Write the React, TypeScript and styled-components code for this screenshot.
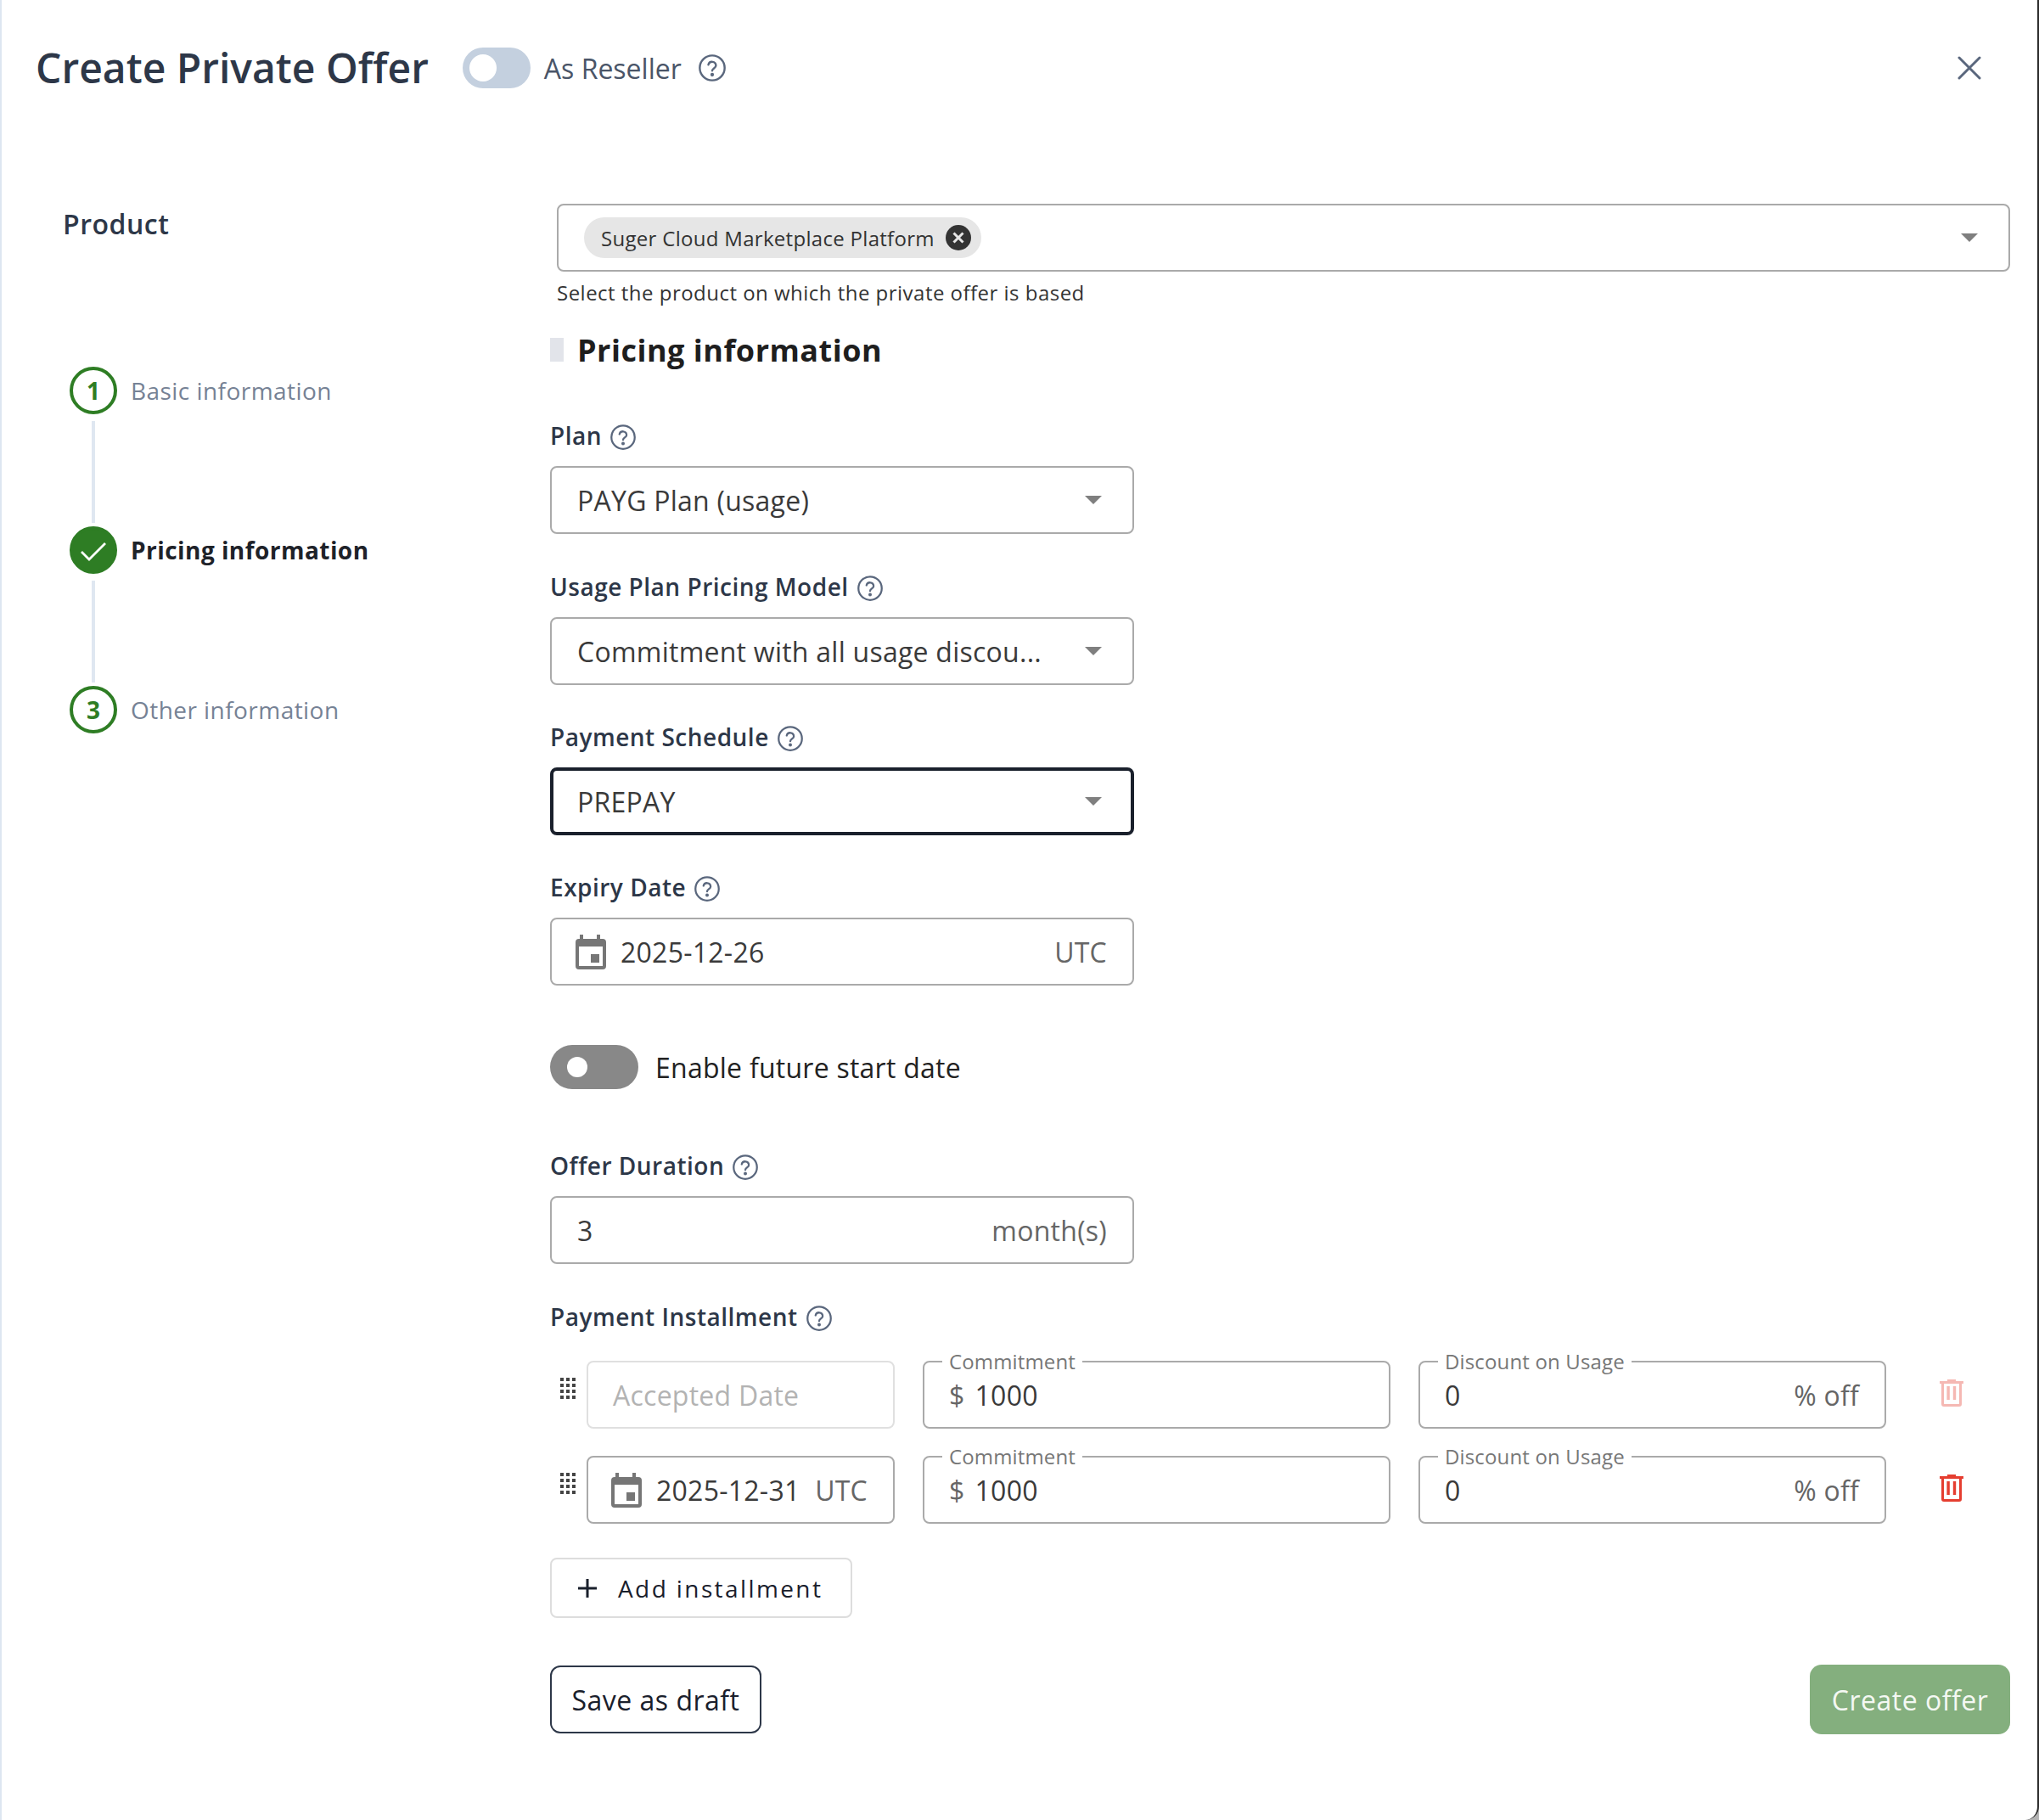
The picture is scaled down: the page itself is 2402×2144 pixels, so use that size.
import React from "react";
import styled, { createGlobalStyle } from "styled-components";

const GlobalStyle = createGlobalStyle`
    html, body {
        margin: 0;
        padding: 0;
        background: #b4b4b4;
    }

    * {
        box-sizing: border-box;
    }
`;

const HelpIcon: React.FC<{ size?: number }> = ({ size = 32 }) => (
    <svg width={size} height={size} viewBox="0 0 24 24" fill="none" stroke="#5a677d" strokeWidth="1.8" strokeLinecap="round">
        <circle cx="12" cy="12" r="11" />
        <path d="M8.6 9.2a3.4 3.4 0 0 1 6.7.7c0 2.2-3.3 2.6-3.3 4.6" />
        <circle cx="12" cy="18" r="0.7" fill="#5a677d" />
    </svg>
);

const CaretIcon: React.FC = () => (
    <svg width="20" height="10" viewBox="0 0 20 10">
        <path d="M0 0h20L10 10z" fill="#7f7f7f" />
    </svg>
);

const CalendarIcon: React.FC = () => (
    <svg width="36" height="41" viewBox="0 0 36 41" fill="#767676">
        <path d="M5 0h4v5h16V0h4v5h3a4 4 0 0 1 4 4v28a4 4 0 0 1-4 4H4a4 4 0 0 1-4-4V9a4 4 0 0 1 4-4h1zM4 14v23h28V14z" fillRule="evenodd" />
        <rect x="18" y="23" width="10" height="10" />
    </svg>
);

const TrashIcon: React.FC<{ faded?: boolean }> = ({ faded }) => (
    <svg width="28" height="32" viewBox="0 0 28 32" fill="#e53e30" opacity={faded ? 0.36 : 1}>
        <path d="M9 0h10v2h9v3H0V2h9z" />
        <path d="M2 5h3v24h18V5h3v24a3 3 0 0 1-3 3H5a3 3 0 0 1-3-3z" />
        <rect x="8.4" y="8" width="3.4" height="16" />
        <rect x="15.8" y="8" width="3.4" height="16" />
    </svg>
);

const DragIcon: React.FC = () => (
    <svg width="18" height="25" viewBox="0 0 18 25" fill="#444">
        {[0, 7, 14].map((x) =>
            [0, 7, 14, 21].map((y) => <rect key={`${x}-${y}`} x={x} y={y} width="4" height="4" />)
        )}
    </svg>
);

const Page = styled.div`
    position: relative;
    width: 2402px;
    height: 2144px;
    overflow: hidden;
    background: #ffffff;
    font-family: "Open Sans", "Liberation Sans", sans-serif;
    border-left: 2px solid #dde6f1;
    border-right: 2px solid #2b2b2b;
    border-bottom-right-radius: 16px;
`;

const Header = styled.header`
    display: flex;
    align-items: center;
    height: 48px;
    margin-top: 56px;
    padding: 0 66px 0 40px;
`;

const Title = styled.h1`
    margin: 0 40px 0 0;
    font-size: 48px;
    font-weight: 600;
    line-height: 48px;
    color: #2d3748;
`;

const Switch = styled.span<{ $large?: boolean }>`
    position: relative;
    flex: none;
    display: block;
    width: ${(p) => (p.$large ? "104px" : "80px")};
    height: ${(p) => (p.$large ? "52px" : "48px")};
    border-radius: 26px;
    background: ${(p) => (p.$large ? "#888888" : "#c4d0df")};

    &::after {
        content: "";
        position: absolute;
        left: ${(p) => (p.$large ? "20px" : "8px")};
        top: ${(p) => (p.$large ? "14px" : "8px")};
        width: ${(p) => (p.$large ? "24px" : "32px")};
        height: ${(p) => (p.$large ? "24px" : "32px")};
        border-radius: 50%;
        background: #ffffff;
    }
`;

const Reseller = styled.span`
    margin: 0 20px 0 16px;
    font-size: 32px;
    color: #4a5568;
`;

const Close = styled.span`
    display: flex;
    margin-left: auto;
`;

const Body = styled.main`
    display: flex;
    margin-top: 136px;
    padding: 0 32px 0 0;
`;

const Side = styled.aside`
    flex: none;
    width: 646px;
    padding-left: 72px;
`;

const SideTitle = styled.div`
    padding-top: 2px;
    font-size: 32px;
    font-weight: 600;
    line-height: 44px;
    color: #2d3748;
    letter-spacing: 0.5px;
`;

const Stepper = styled.ol`
    list-style: none;
    margin: 146px 0 0 8px;
    padding: 0;
`;

const StepItem = styled.li`
    display: flex;
    align-items: center;
    gap: 16px;
`;

const StepDot = styled.span<{ $done?: boolean }>`
    flex: none;
    display: flex;
    align-items: center;
    justify-content: center;
    width: 56px;
    height: 56px;
    border: 4px solid #2e7d24;
    border-radius: 50%;
    background: ${(p) => (p.$done ? "#2e7d24" : "#ffffff")};
    color: #2e7d24;
    font-size: 28px;
    font-weight: 700;

    svg {
        margin-top: 4px;
    }
`;

const StepText = styled.span<{ $active?: boolean }>`
    font-size: 28px;
    letter-spacing: 0.45px;
    font-weight: ${(p) => (p.$active ? 700 : 400)};
    color: ${(p) => (p.$active ? "#1e2229" : "#768295")};
`;

const StepLine = styled.div`
    width: 4px;
    height: 120px;
    margin: 8px 0 4px 26px;
    background: #dfe7f1;
`;

const Content = styled.section`
    flex: 1;
    min-width: 0;
`;

const ProductBox = styled.div`
    display: flex;
    align-items: center;
    height: 80px;
    margin-left: 8px;
    padding: 0 36px 0 30px;
    border: 2px solid #aaaaaa;
    border-radius: 8px;
`;

const Chip = styled.span`
    display: flex;
    align-items: center;
    height: 48px;
    padding: 0 12px 0 20px;
    border-radius: 24px;
    background: #e6e6e6;
    font-size: 24px;
    letter-spacing: 0.3px;
    color: #333333;
`;

const ChipClose = styled.span`
    display: flex;
    margin-left: 13px;
`;

const Push = styled.span<{ $inset?: number }>`
    display: flex;
    margin-left: auto;
    margin-right: ${(p) => p.$inset ?? 0}px;
`;

const Helper = styled.p`
    margin: 9px 0 0 8px;
    font-size: 24px;
    line-height: 32px;
    letter-spacing: 0.48px;
    color: #333333;
`;

const SectionTitle = styled.h2`
    display: flex;
    align-items: center;
    gap: 16px;
    height: 44px;
    margin: 29px 0 0;
    font-size: 36px;
    font-weight: 700;
    letter-spacing: 0.5px;
    color: #1e1e1e;

    &::before {
        content: "";
        width: 16px;
        height: 28px;
        background: #e2e4ea;
    }
`;

const FieldLabel = styled.div<{ $top: number }>`
    display: flex;
    align-items: center;
    gap: 10px;
    height: 40px;
    margin-top: ${(p) => p.$top}px;
    margin-bottom: 16px;
    font-size: 28px;
    font-weight: 600;
    letter-spacing: 0.5px;
    color: #2d3748;

    svg {
        margin-top: 3px;
    }
`;

const Input = styled.div<{ $focused?: boolean; $faded?: boolean; $width?: number }>`
    position: relative;
    display: flex;
    align-items: center;
    width: ${(p) => p.$width ?? 688}px;
    height: 80px;
    padding: 0 ${(p) => (p.$focused ? 28 : 30)}px;
    border: ${(p) => (p.$focused ? "4px solid #1a202c" : `2px solid ${p.$faded ? "#e0e0e0" : "#aaaaaa"}`)};
    border-radius: 8px;
    font-size: 32px;
    letter-spacing: 0.25px;
    color: ${(p) => (p.$faded ? "#b3b3b3" : "#3a3a3a")};
    background: #ffffff;
`;

const Suffix = styled.span`
    margin-left: auto;
    color: #666666;
`;

const DateIcon = styled.span`
    display: flex;
    margin-left: -2px;
    margin-right: 17px;
`;

const DateValue = styled.span`
    white-space: nowrap;
`;

const ToggleRow = styled.div`
    display: flex;
    align-items: center;
    gap: 20px;
    height: 52px;
    margin-top: 70px;
    font-size: 32px;
    letter-spacing: 0.25px;
    color: #222222;
`;

const InstallmentRow = styled.div`
    display: flex;
    align-items: center;
    margin-top: 32px;

    ${Input} {
        padding-left: 29px;
    }
`;

const Handle = styled.span`
    display: flex;
    width: 43px;
    padding-left: 12px;
    margin-top: -16px;
`;

const Floating = styled.span`
    position: absolute;
    left: 21px;
    top: -17px;
    padding: 0 8px;
    background: #ffffff;
    font-size: 24px;
    line-height: 32px;
    letter-spacing: 0.15px;
    color: #777777;
`;

const Spacer = styled.span`
    flex: none;
    width: 33px;
`;

const Trash = styled.span`
    display: flex;
    margin: -4px 0 0 63px;
`;

const Dollar = styled.span`
    margin-right: 12px;
    color: #666666;
`;

const AddButton = styled.div`
    display: flex;
    align-items: center;
    width: 356px;
    height: 71px;
    margin-top: 40px;
    padding-left: 31px;
    border: 2px solid #dddddd;
    border-radius: 8px;
    font-size: 28px;
    letter-spacing: 2.4px;
    color: #1a202c;

    svg {
        margin-right: 25px;
    }
`;

const Footer = styled.div`
    display: flex;
    align-items: center;
    justify-content: space-between;
    margin-top: 55px;
`;

const DraftButton = styled.div`
    display: flex;
    align-items: center;
    justify-content: center;
    width: 249px;
    height: 80px;
    border: 2px solid #2d3748;
    border-radius: 12px;
    font-size: 32px;
    letter-spacing: 0.5px;
    color: #1a202c;
`;

const CreateButton = styled.div`
    display: flex;
    align-items: center;
    justify-content: center;
    width: 236px;
    height: 82px;
    border-radius: 14px;
    background: #84af7e;
    font-size: 32px;
    letter-spacing: 0.5px;
    color: #f4f8f3;
`;

const App: React.FC = () => {
    return (
        <Page>
            <GlobalStyle />
            <Header>
                <Title>Create Private Offer</Title>
                <Switch />
                <Reseller>As Reseller</Reseller>
                <HelpIcon />
                <Close>
                    <svg width="28" height="28" viewBox="0 0 28 28" stroke="#5a677d" strokeWidth="3" strokeLinecap="round">
                        <path d="M2 2l24 24M26 2L2 26" />
                    </svg>
                </Close>
            </Header>
            <Body>
                <Side>
                    <SideTitle>Product</SideTitle>
                    <Stepper>
                        <StepItem>
                            <StepDot>1</StepDot>
                            <StepText>Basic information</StepText>
                        </StepItem>
                        <StepLine />
                        <StepItem>
                            <StepDot $done>
                                <svg width="30" height="22" viewBox="0 0 30 22" fill="none" stroke="#ffffff" strokeWidth="2.8">
                                    <path d="M1 11l9 9L29 1" />
                                </svg>
                            </StepDot>
                            <StepText $active>Pricing information</StepText>
                        </StepItem>
                        <StepLine />
                        <StepItem>
                            <StepDot>3</StepDot>
                            <StepText>Other information</StepText>
                        </StepItem>
                    </Stepper>
                </Side>
                <Content>
                    <ProductBox>
                        <Chip>
                            Suger Cloud Marketplace Platform
                            <ChipClose>
                                <svg width="30" height="30" viewBox="0 0 30 30">
                                    <circle cx="15" cy="15" r="15" fill="#333333" />
                                    <path d="M9.5 9.5l11 11M20.5 9.5l-11 11" stroke="#e6e6e6" strokeWidth="3" />
                                </svg>
                            </ChipClose>
                        </Chip>
                        <Push>
                            <CaretIcon />
                        </Push>
                    </ProductBox>
                    <Helper>Select the product on which the private offer is based</Helper>
                    <SectionTitle>Pricing information</SectionTitle>

                    <FieldLabel $top={59}>
                        Plan <HelpIcon size={30} />
                    </FieldLabel>
                    <Input>
                        PAYG Plan (usage)
                        <Push $inset={6}>
                            <CaretIcon />
                        </Push>
                    </Input>

                    <FieldLabel $top={42}>
                        Usage Plan Pricing Model <HelpIcon size={30} />
                    </FieldLabel>
                    <Input>
                        Commitment with all usage discou...
                        <Push $inset={6}>
                            <CaretIcon />
                        </Push>
                    </Input>

                    <FieldLabel $top={41}>
                        Payment Schedule <HelpIcon size={30} />
                    </FieldLabel>
                    <Input $focused>
                        PREPAY
                        <Push $inset={6}>
                            <CaretIcon />
                        </Push>
                    </Input>

                    <FieldLabel $top={41}>
                        Expiry Date <HelpIcon size={30} />
                    </FieldLabel>
                    <Input>
                        <DateIcon>
                            <CalendarIcon />
                        </DateIcon>
                        <DateValue>2025-12-26</DateValue>
                        <Suffix>UTC</Suffix>
                    </Input>

                    <ToggleRow>
                        <Switch $large />
                        Enable future start date
                    </ToggleRow>

                    <FieldLabel $top={70}>
                        Offer Duration <HelpIcon size={30} />
                    </FieldLabel>
                    <Input>
                        3<Suffix>month(s)</Suffix>
                    </Input>

                    <FieldLabel $top={42}>
                        Payment Installment <HelpIcon size={30} />
                    </FieldLabel>

                    <InstallmentRow>
                        <Handle>
                            <DragIcon />
                        </Handle>
                        <Input $faded $width={363}>
                            Accepted Date
                        </Input>
                        <Spacer />
                        <Input $width={551}>
                            <Floating>Commitment</Floating>
                            <Dollar>$</Dollar>1000
                        </Input>
                        <Spacer />
                        <Input $width={551}>
                            <Floating>Discount on Usage</Floating>0<Suffix>% off</Suffix>
                        </Input>
                        <Trash>
                            <TrashIcon faded />
                        </Trash>
                    </InstallmentRow>

                    <InstallmentRow>
                        <Handle>
                            <DragIcon />
                        </Handle>
                        <Input $width={363}>
                            <DateIcon>
                                <CalendarIcon />
                            </DateIcon>
                            <DateValue>2025-12-31</DateValue>
                            <Suffix>UTC</Suffix>
                        </Input>
                        <Spacer />
                        <Input $width={551}>
                            <Floating>Commitment</Floating>
                            <Dollar>$</Dollar>1000
                        </Input>
                        <Spacer />
                        <Input $width={551}>
                            <Floating>Discount on Usage</Floating>0<Suffix>% off</Suffix>
                        </Input>
                        <Trash>
                            <TrashIcon />
                        </Trash>
                    </InstallmentRow>

                    <AddButton>
                        <svg width="22" height="22" viewBox="0 0 22 22" stroke="#1a202c" strokeWidth="3">
                            <path d="M11 0v22M0 11h22" />
                        </svg>
                        Add installment
                    </AddButton>

                    <Footer>
                        <DraftButton>Save as draft</DraftButton>
                        <CreateButton>Create offer</CreateButton>
                    </Footer>
                </Content>
            </Body>
        </Page>
    );
};

export default App;
